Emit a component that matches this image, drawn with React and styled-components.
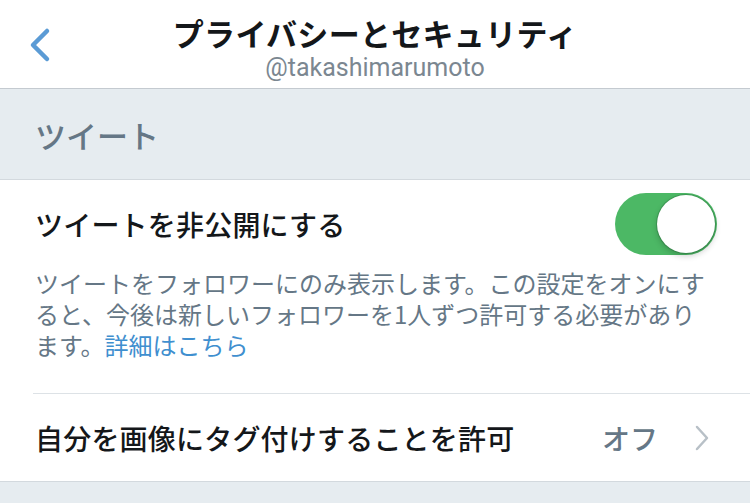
import React from "react";
import styled, { createGlobalStyle } from "styled-components";

const Global = createGlobalStyle`
  html, body { margin: 0; padding: 0; background: #e6ecf0; }
  body {
    font-family: "Noto Sans CJK JP", "Noto Sans", sans-serif;
    -webkit-font-smoothing: antialiased;
  }
`;

const Screen = styled.div`
  width: 750px;
  height: 503px;
  overflow: hidden;
  background: #e6ecf0;
  display: flex;
  flex-direction: column;
`;

const NavBar = styled.header`
  position: relative;
  height: 89px;
  flex: none;
  background: #fff;
  border-bottom: 1px solid #c4cad0;
  display: flex;
  flex-direction: column;
  align-items: center;
  justify-content: flex-start;
  box-sizing: border-box;
  padding-top: 16px;
`;

const BackButton = styled.button`
  position: absolute;
  left: 26px;
  top: 27px;
  width: 28px;
  height: 36px;
  padding: 0;
  border: none;
  background: none;
  display: flex;
  align-items: center;
  justify-content: center;
`;

const Title = styled.h1`
  margin: 0;
  font-size: 31px;
  line-height: 34px;
  font-weight: 700;
  color: #14171a;
  letter-spacing: 0.3px;
`;

const Handle = styled.div`
  margin-top: 4px;
  font-family: Roboto, "Noto Sans", sans-serif;
  font-size: 25px;
  line-height: 28px;
  color: #7b8791;
`;

const SectionHeader = styled.div`
  height: 91px;
  flex: none;
  box-sizing: border-box;
  border-bottom: 1px solid #d3d9de;
  display: flex;
  align-items: center;
  padding-left: 35px;
  font-size: 31px;
  font-weight: 500;
  color: #657786;
`;

const Group = styled.section`
  background: #fff;
  border-bottom: 1px solid #d3d9de;
  padding-left: 33px;
`;

const SettingBlock = styled.div`
  padding: 13px 33px 33px 0;
  border-bottom: ${(p) => (p.$divided ? "1px solid #dde2e6" : "none")};
`;

const Row = styled.div`
  display: flex;
  align-items: center;
  justify-content: space-between;
  min-height: ${(p) => p.$height || 62}px;
`;

const Label = styled.div`
  padding-left: 2px;
  font-size: 28px;
  font-weight: 500;
  color: #14171a;
  letter-spacing: 0.2px;
`;

const Description = styled.p`
  margin: 12px 0 0 2px;
  font-size: 24px;
  line-height: 31px;
  color: #657786;
`;

const Link = styled.a`
  display: inline-block;
  height: 31px;
  line-height: 31px;
  vertical-align: top;
  color: #3f8fcf;
  text-decoration: none;
`;

const Track = styled.div`
  position: relative;
  width: 102px;
  height: 62px;
  border-radius: 31px;
  background: ${(p) => (p.$on ? "#4cb865" : "#e6ecf0")};
  flex: none;
`;

const Knob = styled.div`
  position: absolute;
  top: 2px;
  left: ${(p) => (p.$on ? "42px" : "2px")};
  width: 58px;
  height: 58px;
  border-radius: 50%;
  background: #fff;
  box-shadow: 0 3px 6px rgba(0, 0, 0, 0.2), 0 0 0 1px rgba(40, 110, 60, 0.35);
`;

const NavRow = styled.div`
  display: flex;
  align-items: center;
  justify-content: space-between;
  height: 87px;
  padding-right: 40px;
`;

const Trailing = styled.div`
  display: flex;
  align-items: center;
  gap: 36px;
`;

const Value = styled.span`
  font-size: 28px;
  font-weight: 500;
  color: #657786;
`;

const Toggle = ({ on }) => (
  <Track $on={on}>
    <Knob $on={on} />
  </Track>
);

export default function App() {
  return (
    <>
      <Global />
      <Screen>
        <NavBar>
          <BackButton aria-label="戻る">
            <svg width="24" height="36" viewBox="0 0 24 36">
              <path
                d="M19 4 L5 18 L19 32"
                fill="none"
                stroke="#5b9bd5"
                strokeWidth="4.5"
                strokeLinecap="round"
                strokeLinejoin="round"
              />
            </svg>
          </BackButton>
          <Title>プライバシーとセキュリティ</Title>
          <Handle>@takashimarumoto</Handle>
        </NavBar>

        <SectionHeader>ツイート</SectionHeader>

        <Group>
          <SettingBlock $divided>
            <Row $height={62}>
              <Label>ツイートを非公開にする</Label>
              <Toggle on />
            </Row>
            <Description>
              ツイートをフォロワーにのみ表示します。この設定をオンにす
              <br />
              ると、今後は新しいフォロワーを1人ずつ許可する必要があり
              <br />
              ます。<Link href="#">詳細はこちら</Link>
            </Description>
          </SettingBlock>
          <NavRow>
            <Label>自分を画像にタグ付けすることを許可</Label>
            <Trailing>
              <Value>オフ</Value>
              <svg width="16" height="28" viewBox="0 0 16 28">
                <path
                  d="M3 3 L13 14 L3 25"
                  fill="none"
                  stroke="#b8c0c7"
                  strokeWidth="2.5"
                  strokeLinecap="round"
                  strokeLinejoin="round"
                />
              </svg>
            </Trailing>
          </NavRow>
        </Group>
      </Screen>
    </>
  );
}
